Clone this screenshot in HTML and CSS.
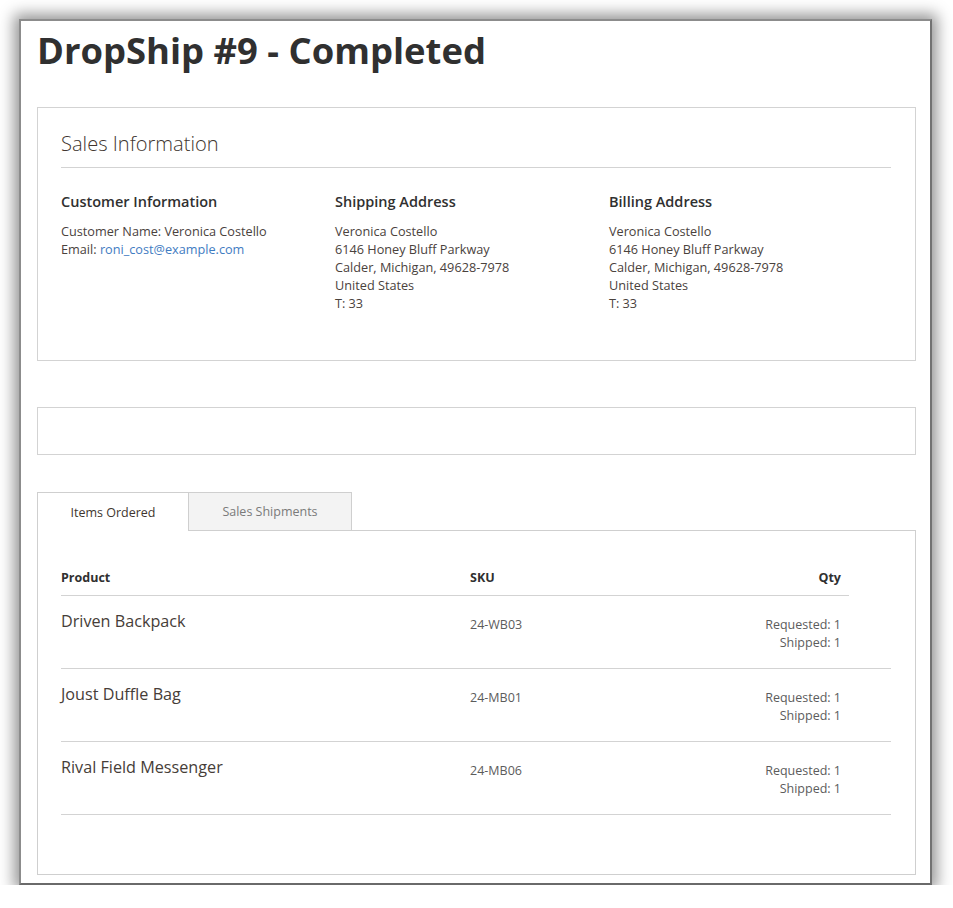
FILE: index.html
```html
<!DOCTYPE html>
<html lang="en">
<head>
<meta charset="utf-8">
<title>DropShip #9 - Completed</title>
<link rel="stylesheet" href="styles.css">
</head>
<body>
<div class="frame">
  <div class="page">
    <h1 class="page-title">DropShip #9 - Completed</h1>

    <section class="box sales">
      <h2 class="box-title">Sales Information</h2>
      <div class="info-cols">
        <div class="info-col">
          <h3 class="info-head">Customer Information</h3>
          <div class="info-text">Customer Name: Veronica Costello</div>
          <div class="info-text">Email: <a class="link" href="#">roni_cost@example.com</a></div>
        </div>
        <div class="info-col">
          <h3 class="info-head">Shipping Address</h3>
          <div class="info-text">Veronica Costello</div>
          <div class="info-text">6146 Honey Bluff Parkway</div>
          <div class="info-text">Calder, Michigan, 49628-7978</div>
          <div class="info-text">United States</div>
          <div class="info-text">T: 33</div>
        </div>
        <div class="info-col">
          <h3 class="info-head">Billing Address</h3>
          <div class="info-text">Veronica Costello</div>
          <div class="info-text">6146 Honey Bluff Parkway</div>
          <div class="info-text">Calder, Michigan, 49628-7978</div>
          <div class="info-text">United States</div>
          <div class="info-text">T: 33</div>
        </div>
      </div>
    </section>

    <section class="box empty"></section>

    <div class="tabs">
      <div class="tab tab-active">Items Ordered</div>
      <div class="tab tab-inactive">Sales Shipments</div>
      <div class="tab-fill"></div>
    </div>
    <div class="panel">
      <div class="items-head">
        <div>Product</div>
        <div>SKU</div>
        <div class="qty">Qty</div>
      </div>
      <div class="item-row">
        <div class="item-name">Driven Backpack</div>
        <div class="item-sku">24-WB03</div>
        <div class="item-qty"><div>Requested: 1</div><div>Shipped: 1</div></div>
      </div>
      <div class="item-row">
        <div class="item-name">Joust Duffle Bag</div>
        <div class="item-sku">24-MB01</div>
        <div class="item-qty"><div>Requested: 1</div><div>Shipped: 1</div></div>
      </div>
      <div class="item-row">
        <div class="item-name">Rival Field Messenger</div>
        <div class="item-sku">24-MB06</div>
        <div class="item-qty"><div>Requested: 1</div><div>Shipped: 1</div></div>
      </div>
    </div>
  </div>
</div>
</body>
</html>
```
FILE: styles.css
```css
html, body {
  margin: 0;
  padding: 0;
  background: #ffffff;
}

body {
  font-family: "Open Sans", "Liberation Sans", sans-serif;
  color: #41362f;
}

.frame {
  margin: 19px 0 0 19px;
  width: 909px;
  height: 862px;
  border: 2px solid #8c8c8c;
  border-right-color: #727272;
  border-bottom-color: #6a6a6a;
  background: #ffffff;
  box-shadow: 0 0 14px 5px rgba(0, 0, 0, 0.42);
  overflow: hidden;
}

.page {
  padding: 0 14px 0 16px;
}

.page-title {
  margin: 0;
  padding-top: 7px;
  font-size: 36.4px;
  line-height: 44px;
  font-weight: 700;
  color: #303030;
}

.box {
  border: 1px solid #d3d3d3;
  box-sizing: border-box;
}

.sales {
  margin-top: 35px;
  padding: 22px 24px 48px 23px;
}

.box-title {
  margin: 0;
  font-size: 20.1px;
  line-height: 28px;
  font-weight: 300;
  color: #41362f;
  padding-bottom: 9px;
  border-bottom: 1px solid #d3d3d3;
}

.info-cols {
  margin-top: 24px;
  display: grid;
  grid-template-columns: 274px 274px 274px;
}

.info-head {
  margin: 0 0 10px 0;
  font-size: 14.5px;
  line-height: 20px;
  font-weight: 600;
  color: #303030;
}

.info-text {
  font-size: 12.7px;
  line-height: 18px;
  color: #4a423d;
}

.link {
  color: #3f7cc2;
  text-decoration: none;
}

.empty {
  margin-top: 46px;
  height: 48px;
}

.tabs {
  margin-top: 37px;
  display: flex;
  height: 39px;
}

.tab {
  box-sizing: border-box;
  height: 39px;
  display: flex;
  align-items: center;
  justify-content: center;
  font-size: 12.5px;
  border-top: 1px solid #cfcfcf;
  border-right: 1px solid #cfcfcf;
}

.tab-active {
  width: 152px;
  border-left: 1px solid #cfcfcf;
  background: #ffffff;
  color: #41362f;
}

.tab-inactive {
  width: 163px;
  background: #f3f3f3;
  border-bottom: 1px solid #cfcfcf;
  color: #7a7a7a;
}

.tab-fill {
  flex: 1;
  border-bottom: 1px solid #cfcfcf;
}

.panel {
  border: 1px solid #cfcfcf;
  border-top: none;
  padding: 37px 0 59px 23px;
}

.items-head {
  width: 788px;
  box-sizing: border-box;
  display: grid;
  grid-template-columns: 409px 1fr auto;
  padding: 1px 8px 8px 0;
  border-bottom: 1px solid #d3d3d3;
  font-size: 12.5px;
  line-height: 18px;
  font-weight: 700;
  color: #303030;
}

.qty {
  text-align: right;
}

.item-row {
  width: 830px;
  height: 73px;
  box-sizing: border-box;
  display: grid;
  grid-template-columns: 409px 1fr auto;
  align-items: start;
  padding: 13px 50px 0 0;
  border-bottom: 1px solid #d3d3d3;
}

.item-name {
  font-size: 16.2px;
  line-height: 24px;
  color: #463d38;
}

.item-sku {
  margin-top: 7px;
  font-size: 12.5px;
  line-height: 18px;
  color: #5c5c5c;
}

.item-qty {
  margin-top: 7px;
  font-size: 12.5px;
  line-height: 18px;
  text-align: right;
  color: #5c5c5c;
}
```
